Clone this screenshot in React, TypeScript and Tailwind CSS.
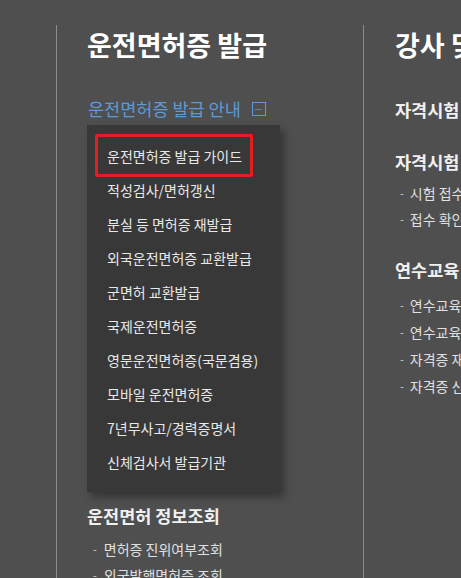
import { Minus } from 'lucide-react';

const guideMenu = [
  '운전면허증 발급 가이드',
  '적성검사/면허갱신',
  '분실 등 면허증 재발급',
  '외국운전면허증 교환발급',
  '군면허 교환발급',
  '국제운전면허증',
  '영문운전면허증(국문겸용)',
  '모바일 운전면허증',
  '7년무사고/경력증명서',
  '신체검사서 발급기관',
];

const infoLinks = ['면허증 진위여부조회', '외국발행면허증 조회'];

const examLinks = ['시험 접수/취소', '접수 확인/출력'];
const eduLinks = ['연수교육 신청', '연수교육 이수확인', '자격증 재발급', '자격증 신청'];

function DashItem({ label, gap }: { label: string; gap: string }) {
  return (
    <li className="flex items-center whitespace-nowrap">
      <span className={`text-[11px] text-[#cfcfcf] ${gap}`}>-</span>
      <span>{label}</span>
    </li>
  );
}

export default function App() {
  return (
    <div
      className="w-[461px] h-[578px] overflow-hidden bg-[#4f4f4f] pt-[25px] flex"
      style={{ fontFamily: '"Noto Sans CJK KR", "Noto Sans", sans-serif' }}
    >
      <div className="w-[56px] shrink-0" />

      {/* 운전면허증 발급 */}
      <section className="w-[307px] shrink-0 border-l border-[#8c8c8c] pl-[30px]">
        <h1 className="mt-[4px] text-[27px] leading-[32px] font-bold text-white whitespace-nowrap">
          운전면허증 발급
        </h1>

        <div className="mt-[37px] flex items-center gap-[11px] text-[17.5px] leading-[22px] text-[#5d9ad6] whitespace-nowrap pl-px">
          <span>운전면허증 발급 안내</span>
          <span className="w-[14px] h-[14px] border border-[#5d9ad6] flex items-center justify-center">
            <Minus size={11} strokeWidth={1.5} />
          </span>
        </div>

        {/* 드롭다운 메뉴 */}
        <ul className="mt-[5px] w-[193px] bg-[#383838] pt-[14px] pb-[13px] shadow-[4px_5px_8px_rgba(0,0,0,0.35)]">
          {guideMenu.map((item, i) => (
            <li
              key={item}
              className="relative h-[34px] flex items-center pl-[20px] text-[14px] text-[#e8e8e8] whitespace-nowrap"
            >
              {item}
              {i === 0 && (
                <span className="absolute left-[8px] top-[-5px] w-[158px] h-[43px] border-[3px] border-[#e11f1f] rounded-[2px]" />
              )}
            </li>
          ))}
        </ul>

        <h2 className="mt-[13px] text-[17.5px] leading-[22px] font-semibold text-[#f0f0f0] whitespace-nowrap">
          운전면허 정보조회
        </h2>
        <ul className="mt-[9px] pl-[6px] text-[14px] leading-[26px] text-[#e0e0e0]">
          {infoLinks.map((l) => (
            <DashItem key={l} label={l} gap="mr-[7px]" />
          ))}
        </ul>
      </section>

      {/* 강사 및 기능검정원 */}
      <section className="shrink-0 border-l border-[#8c8c8c] pl-[31px]">
        <h1 className="mt-[4px] text-[27px] leading-[32px] font-bold text-white whitespace-nowrap">
          강사 및 기능검정원
        </h1>

        <h2 className="mt-[38px] text-[17.5px] leading-[22px] font-bold text-[#f0f0f0] whitespace-nowrap">
          자격시험 안내
        </h2>

        <h2 className="mt-[30px] text-[17.5px] leading-[22px] font-bold text-[#f0f0f0] whitespace-nowrap">
          자격시험 접수
        </h2>
        <ul className="mt-[7px] pl-[5px] text-[14px] leading-[26px] text-[#e0e0e0]">
          {examLinks.map((l) => (
            <DashItem key={l} label={l} gap="mr-[6px]" />
          ))}
        </ul>

        <h2 className="mt-[27px] text-[17.5px] leading-[22px] font-bold text-[#f0f0f0] whitespace-nowrap">
          연수교육
        </h2>
        <ul className="mt-[11px] pl-[5px] text-[14px] leading-[27px] text-[#e0e0e0]">
          {eduLinks.map((l) => (
            <DashItem key={l} label={l} gap="mr-[6px]" />
          ))}
        </ul>
      </section>
    </div>
  );
}
